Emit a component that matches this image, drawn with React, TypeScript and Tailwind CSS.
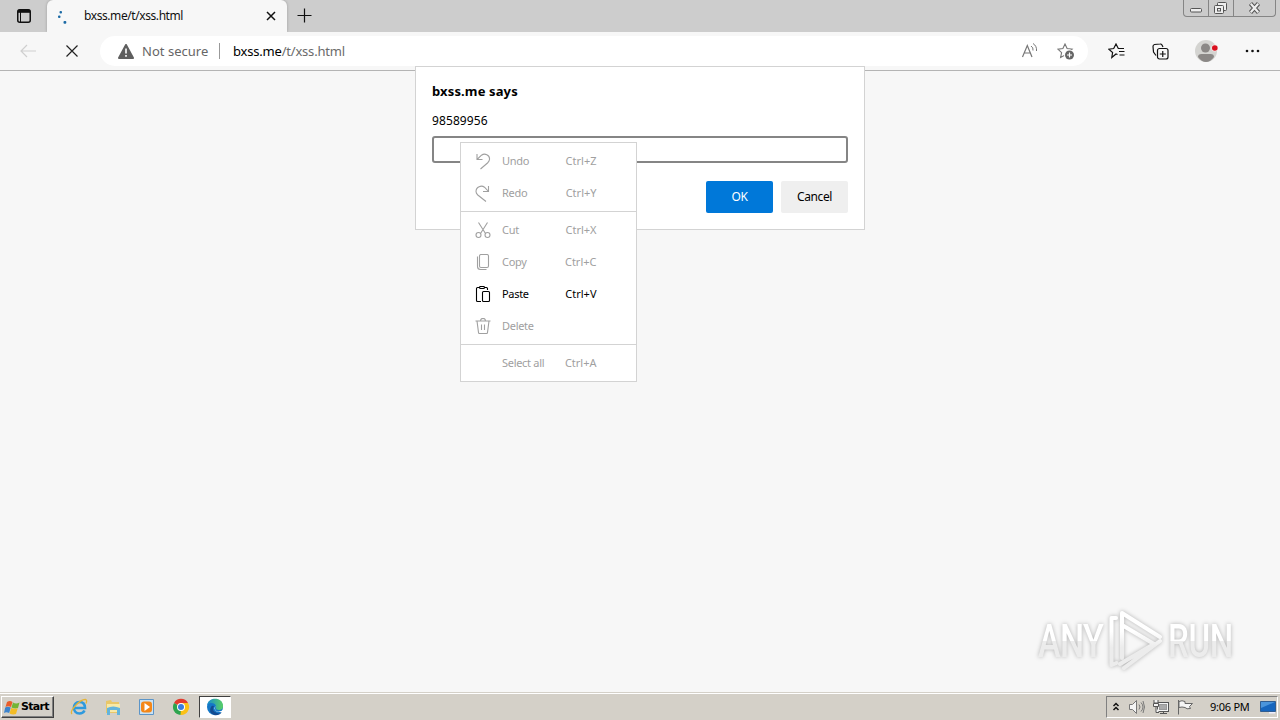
import React from 'react';

interface MenuEntry {
  label: string;
  shortcut?: string;
  enabled?: boolean;
  icon?: React.ReactNode;
}

const menuGroups: MenuEntry[][] = [
  [
    {
      label: 'Undo',
      shortcut: 'Ctrl+Z',
      icon: <path d="M2 1v5.500h5.500M2 6.500L6.500 2.200C9.500 0 15 1.500 14.500 6.500c-.2 1.500-1 2.500-2 3.500l-7 6" />,
    },
    {
      label: 'Redo',
      shortcut: 'Ctrl+Y',
      icon: <path d="M13.500 1v5.500H8M13.500 6.500L9.500 2.200C6.500 0 1 1.500 1 6.500c0 1.500.8 2.500 1.800 3.500L11 16.500" />,
    },
  ],
  [
    {
      label: 'Cut',
      shortcut: 'Ctrl+X',
      icon: (
        <>
          <path d="M3.500 0.500l7 11M12.500 0.500l-7 11" />
          <circle cx="3.500" cy="13" r="2.500" />
          <circle cx="12.500" cy="13" r="2.500" />
        </>
      ),
    },
    {
      label: 'Copy',
      shortcut: 'Ctrl+C',
      icon: (
        <>
          <rect x="4.500" y="0.500" width="9" height="13" rx="1.500" />
          <path d="M2.500 2.500v10c0 2 1 3 3 3h6" />
        </>
      ),
    },
    {
      label: 'Paste',
      shortcut: 'Ctrl+V',
      enabled: true,
      icon: (
        <>
          <path d="M6 15.500H2.500a1 1 0 0 1-1-1v-12a1 1 0 0 1 1-1H4M10 1.500h1.500a1 1 0 0 1 1 1V4" />
          <rect x="4.500" y="0.500" width="5" height="2" rx="1" />
          <rect x="7.500" y="5.500" width="7" height="10" rx="1" />
        </>
      ),
    },
    {
      label: 'Delete',
      icon: (
        <path d="M0.500 3h15M5.500 3c0-3.500 5-3.500 5 0M2 3l1.500 11.500a1 1 0 0 0 1 1h7a1 1 0 0 0 1-1L14 3M6.500 6.500v5.500M9.500 6.500v5.500" />
      ),
    },
  ],
  [{ label: 'Select all', shortcut: 'Ctrl+A' }],
];

const starPath = 'M8 1l2.100 4.600 5 .6-3.700 3.400 1 4.900L8 12.100 3.600 14.500l1-4.900L.9 6.200l5-.6z';

const TabStrip: React.FC = () => (
  <header className="flex h-8 items-start bg-[#cdcdcd]">
    <div className="flex h-8 w-[47px] shrink-0 items-center pl-4">
      <svg width="16" height="16" viewBox="0 0 16 16" fill="none" stroke="#111">
        <rect x="1.750" y="1.750" width="12.500" height="12.500" rx="2" strokeWidth="1.500" />
        <path d="M2 3.300h12" strokeWidth="3" />
        <path d="M4.500 4v10" strokeWidth="1" />
      </svg>
    </div>
    <div className="flex h-8 w-[240px] shrink-0 items-center rounded-t-md bg-[#f7f7f7] pl-2.5 shadow-[0_0_3px_rgba(0,0,0,0.25)]">
      <svg width="16" height="16" viewBox="0 0 16 16" fill="#1b6aa5">
        <rect x="2.500" y="3" width="2.500" height="2.500" rx="1" />
        <rect x="1" y="7.500" width="2.500" height="2.500" rx="1" />
        <rect x="6.500" y="13" width="2.800" height="2.800" rx="1" />
      </svg>
      <span className="ml-[11px] w-[182px] text-[12px] leading-4 tracking-[-0.42px] text-[#111]">
        bxss.me/t/xss.html
      </span>
      <svg width="10" height="10" viewBox="0 0 10 10" stroke="#111" strokeWidth="1.500">
        <path d="M1 1l8 8M9 1L1 9" />
      </svg>
    </div>
    <svg className="ml-2.5 mt-2" width="15" height="15" viewBox="0 0 15 15" stroke="#111" strokeWidth="1.200">
      <path d="M7.500 0.500v14M0.500 7.500h14" />
    </svg>
    <div className="ml-auto mr-1 flex h-[17px] w-[93px] rounded-b border border-t-0 border-[#858585] bg-[#cbcbcb]">
      <div className="w-[25px] border-r border-[#858585]">
        <svg width="24" height="16" viewBox="0 0 24 16" fill="#eee" stroke="#555">
          <rect x="6.500" y="8.500" width="11" height="3.500" rx="1" />
        </svg>
      </div>
      <div className="w-[25px] border-r border-[#858585]">
        <svg width="24" height="16" viewBox="0 0 24 16" fill="#eee" stroke="#555">
          <rect x="8.500" y="2.500" width="9" height="8" rx="1" />
          <rect x="5.500" y="5.500" width="9" height="8" rx="1" />
          <rect x="8.500" y="8.500" width="3" height="2.500" />
        </svg>
      </div>
      <svg width="41" height="16" viewBox="0 0 41 16" fill="none">
        <path d="M16.500 3.500l8 9M24.500 3.500l-8 9" stroke="#555" strokeWidth="4.200" />
        <path d="M16.800 3.800l7.400 8.400M24.200 3.800l-7.400 8.400" stroke="#eee" strokeWidth="2.200" />
      </svg>
    </div>
  </header>
);

const Toolbar: React.FC = () => (
  <div className="relative flex h-[39px] items-center border-b border-[#b4b4b4] bg-[#f7f7f7]">
    <svg className="ml-5" width="16" height="14" viewBox="0 0 16 14" fill="none" stroke="#cfcfcf" strokeWidth="1.200">
      <path d="M16 7H1M7 1L1 7l6 6" />
    </svg>
    <svg className="ml-[30px]" width="12" height="12" viewBox="0 0 12 12" stroke="#222" strokeWidth="1.200">
      <path d="M0.500 0.500l11 11M11.500 0.500l-11 11" />
    </svg>
    <div className="ml-[22px] flex h-[30px] w-[988px] items-center rounded-full bg-white pl-[18px]">
      <svg width="16" height="15" viewBox="0 0 16 15">
        <path d="M8 1l7 13H1z" fill="#5f5f5f" stroke="#5f5f5f" strokeWidth="2" strokeLinejoin="round" />
        <path d="M8 4.500v5M8 11v1.700" stroke="#fff" strokeWidth="1.600" />
      </svg>
      <span className="ml-2 w-[77px] text-[13px] leading-4 tracking-[0.02px] text-[#666]">Not secure</span>
      <span className="h-4 w-px bg-[#999]" />
      <span className="ml-[13px] text-[13px] leading-4 tracking-[-0.2px] text-[#6b6b6b]">
        <span className="text-black">bxss.me</span>/t/xss.html
      </span>
      <svg className="ml-auto" width="17" height="16" viewBox="0 0 17 16" fill="none" stroke="#777">
        <path d="M1.500 14L6.300 2.500 11 14M3.300 10h6" strokeWidth="1.200" />
        <path d="M10 3q2.500 1.500 2 4.500M12 0.500q4 2.500 3.500 7.500" />
      </svg>
      <svg className="ml-[19px] mr-[13px]" width="18" height="17" viewBox="0 0 18 17" fill="none">
        <path d={starPath} stroke="#777" strokeWidth="1.100" />
        <circle cx="12.500" cy="12" r="5.500" fill="#fff" />
        <circle cx="12.500" cy="12" r="4.500" fill="#666" />
        <path d="M12.500 9.500v5M10 12h5" stroke="#fff" strokeWidth="1.200" />
      </svg>
    </div>
    <svg className="ml-5" width="17" height="16" viewBox="0 0 17 16" fill="none" stroke="#111" strokeWidth="1.200">
      <path d="M9.500 11.500L8 11l-4.200 3.500.8-5L.8 6.200l4.900-.7L8 1l2.300 4.500H16M11 8.500h5.500M11.500 12h5" />
    </svg>
    <svg className="ml-[27px]" width="17" height="17" viewBox="0 0 17 17" fill="none" stroke="#111" strokeWidth="1.200">
      <path d="M4 12.500L1.500 9 1 3.500a2 2 0 0 1 1.500-2L8 1a2 2 0 0 1 2 1l1 2" />
      <rect x="5.500" y="5.500" width="10.500" height="10.500" rx="2" />
      <path d="M10.750 8v6M7.800 11h6" />
    </svg>
    <svg className="ml-[25px]" width="24" height="24" viewBox="0 0 24 24">
      <circle cx="12" cy="12" r="11" fill="#d4d4d1" />
      <circle cx="11.500" cy="9" r="4.500" fill="#8b8886" />
      <path d="M4 18q0-3 3.500-3h9q3.500 0 3.500 3-3.500 5-8 5t-8-5z" fill="#8b8886" />
      <circle cx="20.800" cy="9" r="3.500" fill="#f7e5e5" />
      <circle cx="20.800" cy="9" r="2.800" fill="#d9101e" />
    </svg>
    <svg className="ml-[27px]" width="15" height="4" viewBox="0 0 15 4" fill="#111">
      <circle cx="2" cy="2" r="1.300" />
      <circle cx="7.500" cy="2" r="1.300" />
      <circle cx="13" cy="2" r="1.300" />
    </svg>
  </div>
);

const PromptDialog: React.FC = () => (
  <div className="absolute left-[415px] top-[66px] flex h-[164px] w-[450px] flex-col border border-[#d3d3d3] bg-white px-4 pt-4">
    <h1 className="text-[13px] font-bold leading-4 tracking-[0.13px] text-black">bxss.me says</h1>
    <p className="mt-3.5 text-[12px] leading-4 tracking-[0.1px] text-black">98589956</p>
    <div className="mt-[7px] h-[27px] shrink-0 rounded-[3px] border-2 border-[#858585]" />
    <div className="mt-[18px] flex justify-end gap-2 text-[12px]">
      <button className="h-8 w-[67px] rounded-[2px] bg-[#0078d9] tracking-[-0.5px] text-white">OK</button>
      <button className="h-8 w-[67px] rounded-[2px] bg-[#efefef] tracking-[-0.4px] text-black">Cancel</button>
    </div>
  </div>
);

const ContextMenu: React.FC = () => (
  <div className="absolute left-[460px] top-[142px] w-[177px] border border-[#d3d3d3] bg-white">
    {menuGroups.map((group, i) => (
      <div key={i} className="border-b border-[#d3d3d3] py-0.5 last:border-b-0">
        {group.map((item) => (
          <div
            key={item.label}
            className={`flex h-8 items-center pl-3.5 pr-[39.5px] text-[11px] ${item.enabled ? 'text-black' : 'text-[#a0a0a0]'}`}
          >
            <svg width="16" height="17" viewBox="0 0 16 17" fill="none" stroke="currentColor" strokeWidth="1.100">
              {item.icon}
            </svg>
            <span className="ml-[11px] tracking-[-0.3px]">{item.label}</span>
            <span className="ml-auto">{item.shortcut}</span>
          </div>
        ))}
      </div>
    ))}
  </div>
);

const Watermark: React.FC = () => (
  <div className="absolute left-[1038px] top-[608px] flex h-[66px] items-center drop-shadow-[0_0_2px_rgba(0,0,0,0.28)]">
    <span className="-mr-[31px] w-[100px] shrink-0 origin-left scale-x-[0.74] bg-linear-to-b from-white from-50% to-[#ececec] to-50% bg-clip-text font-['Roboto'] text-[46px] font-medium leading-none tracking-[-0.8px] text-transparent">
      ANY
    </span>
    <svg width="60" height="64" viewBox="0 0 60 64" fill="none" strokeWidth="4" strokeLinejoin="round" strokeLinecap="round">
      <defs>
        <linearGradient id="logoFade" gradientUnits="userSpaceOnUse" x1="0" y1="0" x2="0" y2="64">
          <stop offset="0.35" stopColor="#ffffff" />
          <stop offset="0.6" stopColor="#ececec" />
        </linearGradient>
      </defs>
      <path d="M9 9H4.500v47l5-2" stroke="url(#logoFade)" />
      <path d="M15 49V4l38 24M15 16l32 19-34 20M53 32L17 59" stroke="url(#logoFade)" />
    </svg>
    <span className="ml-px origin-left scale-x-[0.72] bg-linear-to-b from-white from-50% to-[#ececec] to-50% bg-clip-text font-['Roboto'] text-[46px] font-medium leading-none tracking-[-0.6px] text-transparent">
      RUN
    </span>
  </div>
);

const Taskbar: React.FC = () => (
  <footer className="flex h-[28px] items-center border-t border-[#d4d0c8] bg-[#d4d0c8] pt-px shadow-[inset_0_1px_0_#fff]">
    <button className="ml-px flex h-[22px] w-[53px] items-center border border-b-[#404040] border-l-white border-r-[#404040] border-t-white pl-0.5 font-['DejaVu_Sans'] text-[11px] font-bold tracking-[-0.7px] shadow-[inset_-1px_-1px_0_#808080]">
      <svg className="mr-px shrink-0" width="16" height="15" viewBox="0 0 16 15">
        <path d="M3 2q3-2 5.500 0L7 7q-3-1.500-5.500 0z" fill="#e95d2a" />
        <path d="M9 2.500q3 2 6.500 0L14 8q-3 1-6.500-.5z" fill="#72b536" />
        <path d="M1.200 7.500q2.500-1.500 5.500 0L5.200 13q-3-1.500-5.200 0z" fill="#3c83cc" />
        <path d="M7.200 8q3 1.500 6.500.3L12 14q-3 1-6.500-.5z" fill="#f3bc25" />
      </svg>
      Start
    </button>
    <div className="ml-4 flex items-center">
      <svg width="18" height="18" viewBox="0 0 18 18" fill="none">
        <path d="M14.500 12.500q-1.500 3-5 3c-7.500 0-7.500-11.500 0-11.500q5.500 0 5.500 6H5" stroke="#2e9ade" strokeWidth="2.600" />
        <path d="M2 16C-1 13 10 1 15.500 1.500q2 .5.500 4" stroke="#e5b437" strokeWidth="1.300" />
      </svg>
      <svg className="ml-4" width="18" height="18" viewBox="0 0 18 18">
        <path d="M2 3l5-1 1 2h7v11H2z" fill="#e9c769" />
        <path d="M3 6h13v8H3z" fill="#f8e9a7" />
        <path d="M3 10q6-3 13 0v7h-3v-5H6v5H3z" fill="#64b4dc" />
      </svg>
      <svg className="ml-4" width="18" height="18" viewBox="0 0 18 18">
        <path d="M1.500 1.500h14v15h-14z" fill="#cbe2f3" stroke="#5c95c8" />
        <rect x="3" y="3.500" width="11" height="11" rx="3" fill="#f48718" />
        <path d="M6.500 5l5.500 4-5.500 4z" fill="#fff" />
      </svg>
      <svg className="ml-4" width="18" height="18" viewBox="0 0 18 18">
        <path d="M9 9L2 5a8 8 0 0 1 14 0z" fill="#e33b2e" />
        <path d="M9 9L2 5a8 8 0 0 0 6.500 12L12 11z" fill="#2da44e" />
        <path d="M9 9V5h7a8 8 0 0 1-7.500 12z" fill="#fbc116" />
        <circle cx="9" cy="9" r="4" fill="#fff" />
        <circle cx="9" cy="9" r="3" fill="#397de0" />
      </svg>
      <div className="ml-[9px] flex h-[22px] w-[32px] items-center justify-center border border-b-white border-l-[#404040] border-r-white border-t-[#404040] bg-white">
        <svg width="18" height="18" viewBox="0 0 18 18">
          <defs>
            <linearGradient id="edgeTop" x1="0" x2="1">
              <stop stopColor="#168bd0" />
              <stop offset="1" stopColor="#5bd163" />
            </linearGradient>
          </defs>
          <circle cx="9" cy="9" r="8" fill="#1477c7" />
          <path d="M1 8C2-2 17-1 17 8q0 4-4 4-4 0-3-3 0-4-5-4-3 0-4 3z" fill="url(#edgeTop)" />
          <path d="M8 8q-3 5 3 7 3 1 5-1-3 4-8 3-6-3-3-8 1-2 3-1z" fill="#134b91" />
          <path d="M9.500 8q-2 5 3 5.500 3 0 5-2l.5 2.500-2 0q-7 .5-7.500-3.500 0-1.500 1-2.500z" fill="#fff" />
        </svg>
      </div>
    </div>
    <div className="ml-auto mr-0.5 flex h-[22px] w-[172px] items-center border border-b-white border-l-[#808080] border-r-white border-t-[#808080] pl-[5px]">
      <svg className="mb-0.5" width="8" height="9" viewBox="0 0 8 9" fill="none" stroke="#111" strokeWidth="1.500">
        <path d="M1.500 4L4 1.500 6.500 4M1.500 8L4 5.500 6.500 8" />
      </svg>
      <svg className="ml-[9px]" width="16" height="16" viewBox="0 0 16 16" fill="#f4f4f4" stroke="#777">
        <path d="M0.500 5.500h3l4-4v13l-4-4h-3z" />
        <path d="M10 5.500q2 2.500 0 5M12 3.500q4 4.500 0 9M14 2q3 6 0 12" fill="none" />
      </svg>
      <svg className="ml-[8px]" width="17" height="16" viewBox="0 0 17 16" fill="#f4f4f4" stroke="#555">
        <rect x="4.500" y="3.500" width="11" height="9" />
        <rect x="6.500" y="5.500" width="7" height="5" fill="#aaa" stroke="#999" />
        <path d="M7 14.500h7M10.500 12.500v2M1 1v3h4V1M0.500 4.500h5v3h-5zM3 7.500v6h3" />
      </svg>
      <svg className="ml-[7px]" width="17" height="16" viewBox="0 0 17 16" fill="#f5f5f5" stroke="#666">
        <path d="M1.500 1v14.500M2 2.500q3-1.500 6 0v2h7.500l-3 3 1 2q-4 1-5.500-1-3-1-6 0z" />
      </svg>
      <span className="ml-4 whitespace-nowrap text-[11px] tracking-[-0.25px] text-black">9:06 PM</span>
      <svg className="ml-auto mr-px shrink-0" width="16" height="14" viewBox="0 0 16 14">
        <path d="M0.500 1.500h15v10h-15z" fill="#1766be" stroke="#315d91" />
        <path d="M1 2h14L1 8z" fill="#4b95dc" />
        <path d="M9 12h6v1.500H9z" fill="#eef" />
      </svg>
    </div>
  </footer>
);

const App: React.FC = () => {
  return (
    <div className="relative flex h-[720px] w-[1280px] flex-col overflow-hidden bg-[#f7f7f7] font-['Noto_Sans',sans-serif]">
      <TabStrip />
      <Toolbar />
      <main className="flex-1 bg-[#f7f7f7]" />
      <Taskbar />
      <PromptDialog />
      <ContextMenu />
      <Watermark />
    </div>
  );
};

export default App;
